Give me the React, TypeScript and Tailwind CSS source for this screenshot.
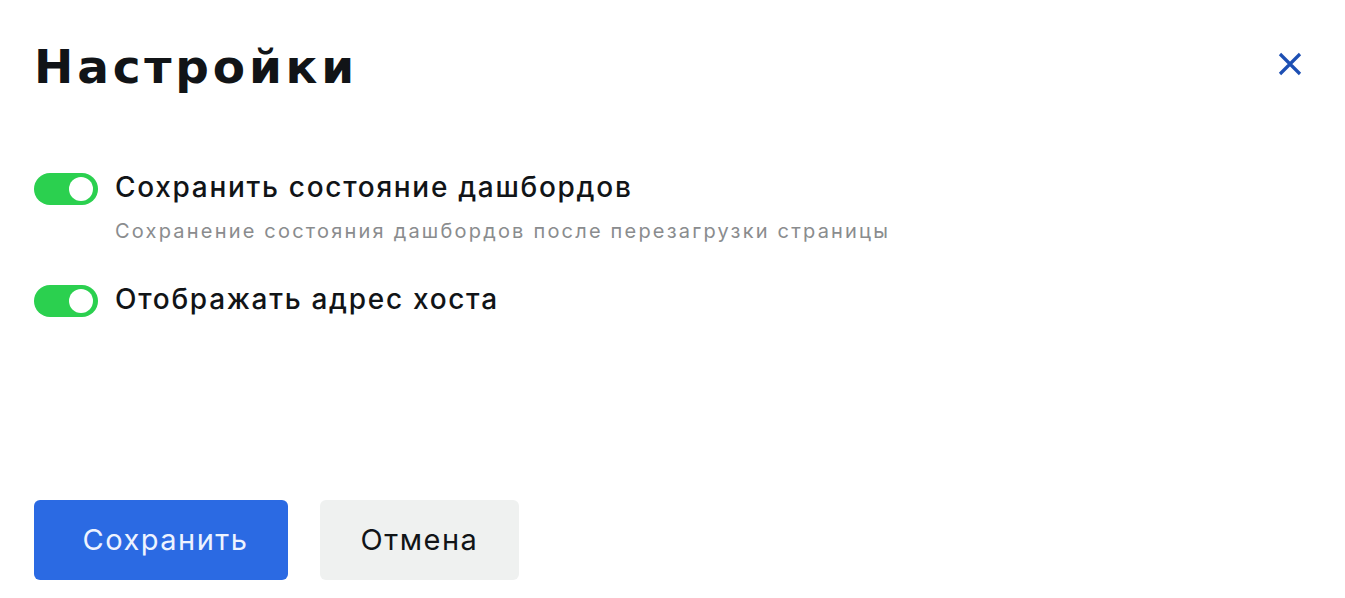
import React, { useState } from "react";

const Toggle = ({ on, onChange }: { on: boolean; onChange: () => void }) => (
  <button
    onClick={onChange}
    className={`relative h-[32px] w-[64px] shrink-0 rounded-full ${on ? "bg-[#2bd04f]" : "bg-[#d0d3d6]"}`}
  >
    <span
      className={`absolute top-[4px] h-[24px] w-[24px] rounded-full bg-white ${on ? "left-[35px]" : "left-[4px]"}`}
    />
  </button>
);

const App = () => {
  const [saveState, setSaveState] = useState(true);
  const [showHost, setShowHost] = useState(true);

  return (
    <div
      className="flex h-[598px] w-full flex-col bg-white pl-[34px] pr-[35px] pb-[18px] text-[#111417]"
      style={{ fontFamily: "Inter, 'Noto Sans', sans-serif" }}
    >
      <div className="flex items-center justify-between pt-[39px]">
        <h1
          className="text-[47px] font-bold leading-[56px] tracking-[3.8px]"
          style={{ fontFamily: "'DejaVu Sans', Inter, sans-serif" }}
        >
          Настройки
        </h1>
        <button className="mb-[7px] flex h-[40px] w-[40px] items-center justify-center text-[#1d4fb3]">
          <svg width="24" height="24" viewBox="0 0 24 24" fill="none" stroke="currentColor" strokeWidth="3.2">
            <path d="M2 2L22 22M22 2L2 22" />
          </svg>
        </button>
      </div>

      <div className="mt-[78px] flex flex-col">
        <div className="flex items-start gap-[17px]">
          <Toggle on={saveState} onChange={() => setSaveState(!saveState)} />
          <span className="-mt-[2px] text-[28px] font-medium leading-[32px] tracking-[1.7px]">
            Сохранить состояние дашбордов
          </span>
        </div>
        <div className="mt-[12px] pl-[81px] text-[20px] leading-[28px] tracking-[2.2px] text-[#8a8c8e]">
          Сохранение состояния дашбордов после перезагрузки страницы
        </div>
        <div className="mt-[40px] flex items-start gap-[17px]">
          <Toggle on={showHost} onChange={() => setShowHost(!showHost)} />
          <span className="-mt-[2px] text-[28px] font-medium leading-[32px] tracking-[1.7px]">
            Отображать адрес хоста
          </span>
        </div>
      </div>

      <div className="mt-auto flex gap-[32px]">
        <button className="h-[80px] w-[254px] rounded-[6px] bg-[#2b6ae3] pl-[9px] text-[29px] tracking-[1.5px] text-[#eef3ff]">
          Сохранить
        </button>
        <button className="h-[80px] w-[199px] rounded-[6px] bg-[#eff1f0] text-[29px] tracking-[1.5px] text-[#111417]">
          Отмена
        </button>
      </div>
    </div>
  );
};

export default App;
